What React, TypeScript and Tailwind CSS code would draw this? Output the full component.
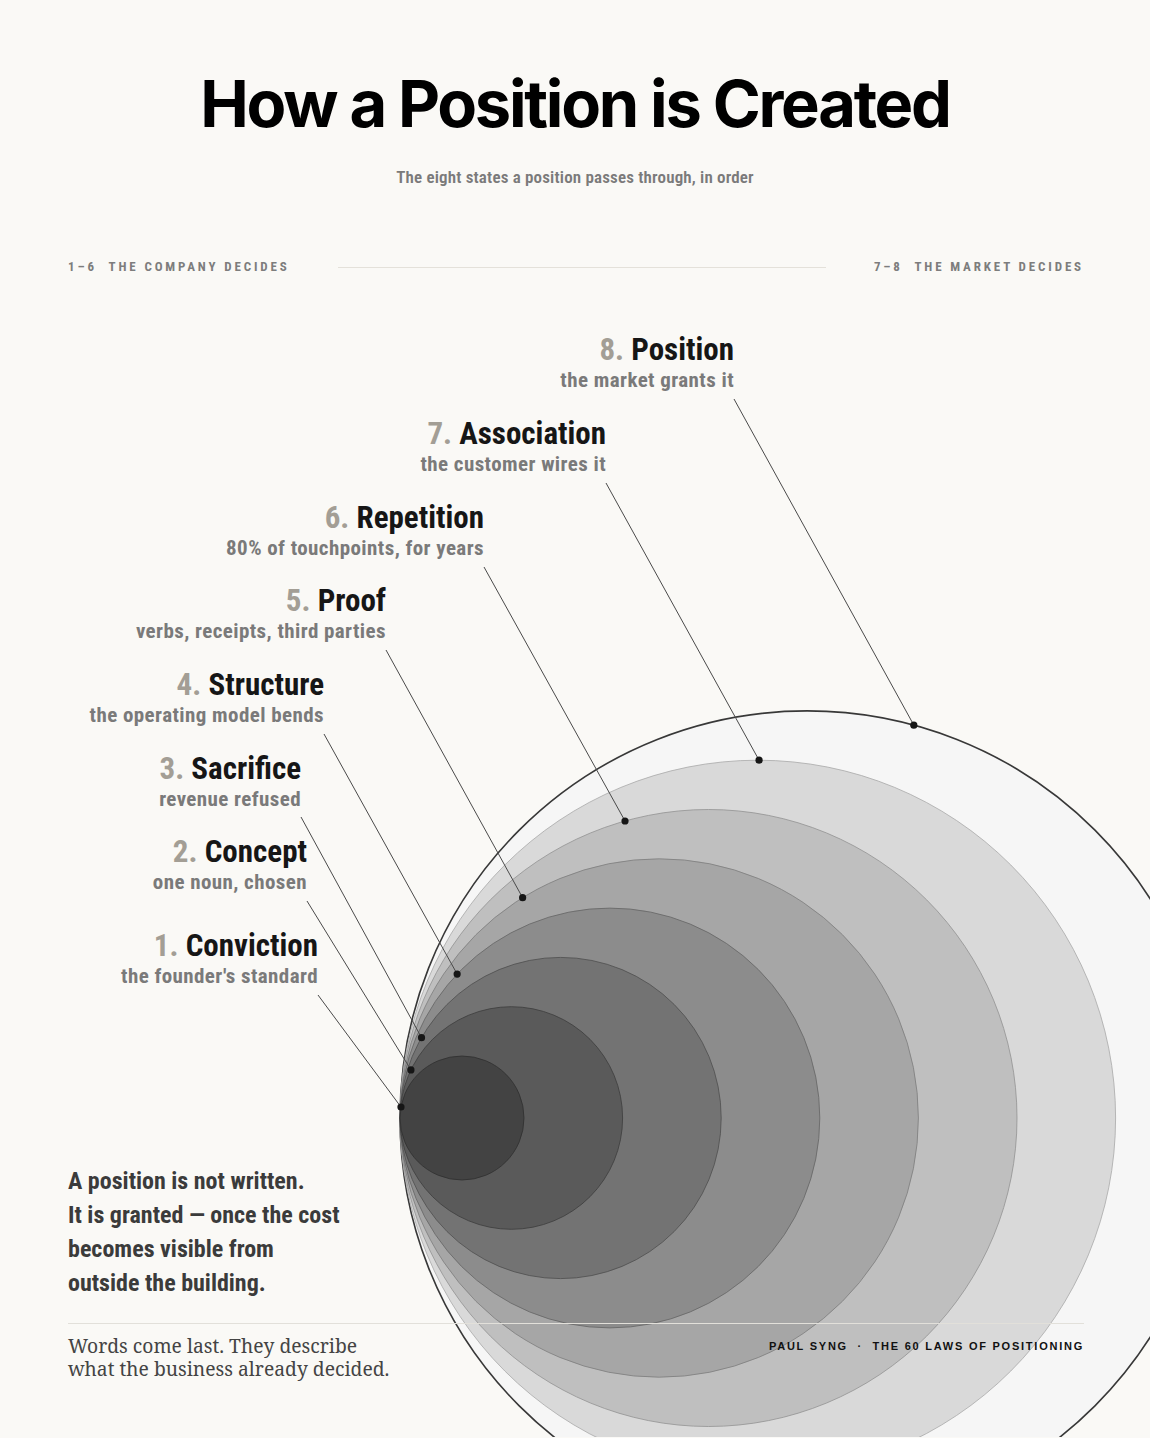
const NARROW = { fontFamily: '"Roboto Condensed", "Liberation Sans Narrow", sans-serif' };

type Stage = {
  n: number;
  name: string;
  note: string;
  right: number; // right edge of label in page px
  top: number; // top of label block in page px
  from: [number, number];
  angle: number;
};

const TANGENT_X = 400;
const CENTER_Y = 1119;
const radius = (i: number) => 62 + 49.3 * (i - 1);

const stages: Stage[] = [
  { n: 1, name: "Conviction", note: "the founder's standard", right: 318, top: 929, from: [318, 996], angle: 169.8 },
  { n: 2, name: "Concept", note: "one noun, chosen", right: 307, top: 835, from: [307, 902], angle: 154.4 },
  { n: 3, name: "Sacrifice", note: "revenue refused", right: 301, top: 752, from: [301, 818], angle: 150 },
  { n: 4, name: "Structure", note: "the operating model bends", right: 324, top: 668, from: [324, 735], angle: 136.7 },
  { n: 5, name: "Proof", note: "verbs, receipts, third parties", right: 386, top: 584, from: [386, 651], angle: 121.8 },
  { n: 6, name: "Repetition", note: "80% of touchpoints, for years", right: 484, top: 501, from: [484, 568], angle: 105.7 },
  { n: 7, name: "Association", note: "the customer wires it", right: 606, top: 417, from: [606, 484], angle: 89.8 },
  { n: 8, name: "Position", note: "the market grants it", right: 734, top: 333, from: [734, 400], angle: 74.8 },
];

const rings = [
  { fill: "#434343", stroke: "#2e2e2e" },
  { fill: "#5a5a5a", stroke: "#3c3c3c" },
  { fill: "#737373", stroke: "#4e4e4e" },
  { fill: "#8c8c8c", stroke: "#646464" },
  { fill: "#a6a6a6", stroke: "#7c7c7c" },
  { fill: "#bfbfbf", stroke: "#929292" },
  { fill: "#d9d9d9", stroke: "#a8a8a8" },
  { fill: "#f6f6f6", stroke: "#383838" },
];

function dot(s: Stage) {
  const r = radius(s.n);
  const cx = TANGENT_X + r;
  const a = (s.angle * Math.PI) / 180;
  return [cx + r * Math.cos(a), CENTER_Y - r * Math.sin(a)];
}

function Diagram() {
  return (
    <svg
      className="pointer-events-none absolute left-0 top-0"
      width={1150}
      height={1148}
      viewBox="0 290 1150 1148"
    >
      {rings.map((_, idx) => {
        const i = 8 - idx;
        const r = radius(i);
        const ring = rings[i - 1];
        return (
          <circle
            key={i}
            cx={TANGENT_X + r}
            cy={CENTER_Y}
            r={r}
            fill={ring.fill}
            stroke={ring.stroke}
            strokeWidth={i === 8 ? 1.6 : 0.8}
          />
        );
      })}
      {stages.map((s) => {
        const [x, y] = dot(s);
        return (
          <g key={s.n}>
            <line x1={s.from[0]} y1={s.from[1]} x2={x} y2={y} stroke="#4a4a4a" strokeWidth={1} />
            <circle cx={x} cy={y} r={3.6} fill="#161616" />
          </g>
        );
      })}
    </svg>
  );
}

export default function App() {
  return (
    <div className="relative min-h-[1438px] w-full overflow-hidden bg-[#faf9f6] text-[#161616]">
      <header className="pt-[71px] text-center">
        <h1
          className="text-[65px] font-bold leading-none tracking-[-0.035em] text-black"
          style={{ fontFamily: "Inter, sans-serif" }}
        >
          How a Position is Created
        </h1>
        <p className="mt-[31px] text-[17px] font-semibold leading-[20px] tracking-[0.01em] text-[#7a7a7a]" style={NARROW}>
          The eight states a position passes through, in order
        </p>
      </header>

      <div
        className="mt-[72px] flex items-center gap-12 pl-[68px] pr-[66px] text-[13px] font-bold leading-4 tracking-[0.22em] text-[#7d7d7d]"
        style={NARROW}
      >
        <span>1–6&nbsp;&nbsp;THE COMPANY DECIDES</span>
        <div className="h-px flex-1 bg-[#e4e1da]" />
        <span>7–8&nbsp;&nbsp;THE MARKET DECIDES</span>
      </div>

      <div className="relative mt-[14px] h-[875px]">
        <Diagram />
        {stages.map((s) => (
          <div
            key={s.n}
            className="absolute text-right"
            style={{ ...NARROW, right: 1150 - s.right, top: s.top - 290 }}
          >
            <div className="whitespace-nowrap text-[31px] font-bold leading-[35px]">
              <span className="text-[#a39e95]">{s.n}.</span> <span className="text-[#161616]">{s.name}</span>
            </div>
            <div className="whitespace-nowrap text-[21px] font-bold leading-[26px] tracking-[0.02em] text-[#7a7a7a]">{s.note}</div>
          </div>
        ))}
      </div>

      <div className="relative pl-[68px] pr-[66px]">
        <p className="text-[24px] font-bold leading-[34px] text-[#3b3b3b]" style={NARROW}>
          A position is not written.
          <br />
          It is granted — once the cost
          <br />
          becomes visible from
          <br />
          outside the building.
        </p>

        <footer className="mt-[23px] flex items-start justify-between border-t border-[#e2e0da] pt-[10px]">
          <p className="text-[19.3px] leading-[23px] text-[#444]" style={{ fontFamily: '"Noto Serif", serif' }}>
            Words come last. They describe
            <br />
            what the business already decided.
          </p>
          <p
            className="mt-[4px] text-[11px] font-bold leading-4 tracking-[0.16em] text-[#111]"
            style={{ fontFamily: '"Liberation Sans", Arial, sans-serif' }}
          >
            PAUL SYNG&nbsp;&nbsp;·&nbsp;&nbsp;THE 60 LAWS OF POSITIONING
          </p>
        </footer>
      </div>
    </div>
  );
}
